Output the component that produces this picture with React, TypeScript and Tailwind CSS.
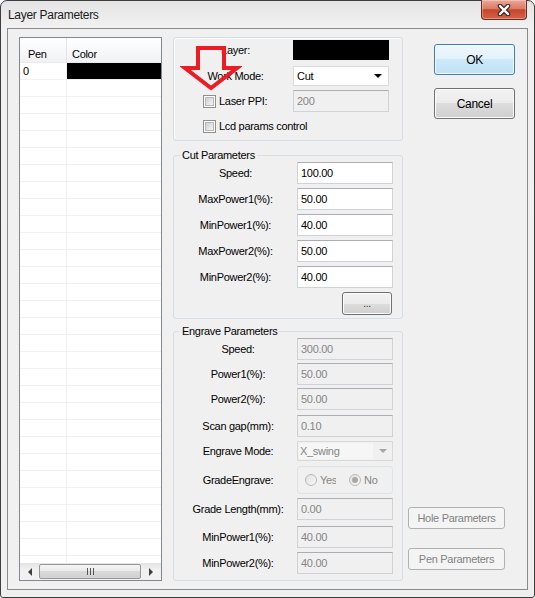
import React from 'react';

const CUT_ROWS = [
  { label: 'Speed:', value: '100.00' },
  { label: 'MaxPower1(%):', value: '50.00' },
  { label: 'MinPower1(%):', value: '40.00' },
  { label: 'MaxPower2(%):', value: '50.00' },
  { label: 'MinPower2(%):', value: '40.00' },
];

const PEN_ROWS = Array.from({ length: 30 }, (_, i) => i);

function TextBox({ value, disabled = false }: { value: string; disabled?: boolean }) {
  return (
    <input
      readOnly
      disabled={disabled}
      value={value}
      className={`h-[22px] w-[96px] border border-[#cfd3d8] border-t-[#abadb3] px-[3px] text-[11px] outline-none ${
        disabled ? 'bg-[#f0f0f0] text-[#858585]' : 'bg-white text-black'
      }`}
    />
  );
}

function CheckBox() {
  return (
    <span className="flex h-[13px] w-[13px] shrink-0 items-center justify-center border border-[#8e8f8f] bg-white">
      <span className="block h-[9px] w-[9px] border border-[#b5b9bd] bg-[linear-gradient(135deg,#cdd0d4,#f4f4f4)]" />
    </span>
  );
}

function Radio({ checked = false }: { checked?: boolean }) {
  return (
    <span className="flex h-[12px] w-[12px] shrink-0 items-center justify-center rounded-full border border-[#b9b9b9] bg-[linear-gradient(135deg,#e2e2e2,#f7f7f7)]">
      {checked && <span className="block h-[6px] w-[6px] rounded-full bg-[#a8a8a8]" />}
    </span>
  );
}

function Caret({ color }: { color: string }) {
  return <span className={`h-0 w-0 border-x-[4px] border-t-[4px] border-x-transparent ${color}`} />;
}

const winButton =
  'rounded-[3px] border border-[#707070] bg-[linear-gradient(#f2f2f2,#ebebeb_50%,#dddddd_50%,#cfcfcf)] shadow-[inset_0_0_0_1px_#fcfcfc]';

function PenList() {
  return (
    <div className="flex h-[544px] w-[143px] flex-col overflow-hidden border border-[#828790] bg-white">
      {/* header */}
      <div className="flex h-[25px] shrink-0 border-b border-[#eaeaea] bg-gradient-to-b from-white to-[#f1f2f4]">
        <div className="w-[47px] border-r border-[#e3e4e6] pl-[8px] pt-[8px]">Pen</div>
        <div className="pl-[5px] pt-[8px]">Color</div>
      </div>
      {/* rows */}
      <div className="flex-1 overflow-hidden">
        {PEN_ROWS.map(i => (
          <div key={i} className="flex h-[17px] border-b border-[#f0f0f0]">
            <div className="flex w-[47px] items-center border-r border-[#f0f0f0] pl-[3px]">{i === 0 ? '0' : ''}</div>
            <div className={`flex-1 ${i === 0 ? 'bg-black' : ''}`} />
          </div>
        ))}
      </div>
      {/* horizontal scrollbar */}
      <div className="flex h-[17px] shrink-0 items-center bg-[linear-gradient(#e3e3e3,#f1f1f1_40%,#f1f1f1)]">
        <div className="flex w-[17px] justify-center pl-[2px]">
          <span className="h-0 w-0 border-y-[4px] border-r-[4px] border-y-transparent border-r-[#3f3f3f]" />
        </div>
        <div className="ml-[2px] flex h-[15px] w-[102px] items-center justify-center gap-[2px] rounded-[2px] border border-[#979797] bg-[linear-gradient(#f5f5f5,#e9e9e9_50%,#d9d9d9_50%,#d2d2d2)]">
          <span className="h-[7px] w-[1px] bg-[#555]" />
          <span className="h-[7px] w-[1px] bg-[#555]" />
          <span className="h-[7px] w-[1px] bg-[#555]" />
        </div>
        <div className="ml-[2px] flex w-[17px] justify-center pr-[2px]">
          <span className="h-0 w-0 border-y-[4px] border-l-[4px] border-y-transparent border-l-[#3f3f3f]" />
        </div>
      </div>
    </div>
  );
}

function EngraveRow({ label, mt, children }: { label: string; mt: string; children: React.ReactNode }) {
  return (
    <div className={`flex items-center ${mt}`}>
      <span className="w-[123px] pl-[5px] text-center">{label}</span>
      {children}
    </div>
  );
}

export default function App() {
  return (
    <div className="relative flex h-[598px] w-[535px] flex-col rounded-t-[7px] rounded-b-[3px] border border-[#3e3e3e] bg-[linear-gradient(#e4e4e4,#f1f1f1_26px,#efefef)] font-['Liberation_Sans',Arial,sans-serif] text-[11px] tracking-[-0.3px] text-black">
      {/* Title bar */}
      <div className="flex h-[27px] shrink-0 items-start justify-between pl-[7px] pr-[7px]">
        <span className="mt-[7px] text-[12px] leading-[15px] text-[#1b1b1b]">Layer Parameters</span>
        <div className="-mt-px flex h-[20px] w-[46px] items-center justify-center rounded-b-[4px] border border-t-0 border-[#6b2b1f] bg-[linear-gradient(#eaa899,#dc7a64_45%,#c5452c_52%,#d4644a)] shadow-[inset_0_0_0_1px_rgba(255,255,255,0.3)]">
          <svg width="14" height="12" viewBox="0 0 14 12">
            <path d="M3 2 L11 10 M11 2 L3 10" stroke="#3b2a28" strokeWidth="4.6" strokeLinecap="round" />
            <path d="M3 2 L11 10 M11 2 L3 10" stroke="#ffffff" strokeWidth="2.4" strokeLinecap="round" />
          </svg>
        </div>
      </div>

      {/* Client area */}
      <div className="mx-[6px] flex h-[562px] shrink-0 border border-[#8a8a8a] bg-[#f0f0f0] pl-[11px] pt-[8px]">
        <PenList />

        {/* Parameter column */}
        <div className="ml-[11px] flex w-[230px] flex-col">
          {/* Layer group */}
          <div className="h-[104px] rounded-[3px] border border-[#d5dfe5] pt-[2px] shadow-[inset_1px_1px_0_#fbfbfb]">
            <div className="flex h-[20px] items-center">
              <span className="w-[119px] pl-[4px] text-center">Layer:</span>
              <div className="h-[20px] w-[96px] bg-black" />
            </div>
            <div className="mt-[6px] flex h-[20px] items-center">
              <span className="w-[119px] pl-[4px] text-center">Work Mode:</span>
              <div className="flex h-[20px] w-[96px] items-center justify-between border border-[#dadada] bg-white pl-[3px] pr-[6px]">
                <span>Cut</span>
                <Caret color="border-t-black" />
              </div>
            </div>
            <div className="mt-[4px] flex h-[22px] items-center">
              <div className="flex w-[119px] items-center pl-[29px]">
                <CheckBox />
                <span className="ml-[3px]">Laser PPI:</span>
              </div>
              <TextBox value="200" disabled />
            </div>
            <div className="mt-[8px] flex h-[13px] items-center pl-[29px]">
              <CheckBox />
              <span className="ml-[3px]">Lcd params control</span>
            </div>
          </div>

          {/* Cut Parameters */}
          <fieldset className="mt-[8px] rounded-[3px] border border-[#d5dfe5] pb-[3px]">
            <legend className="ml-[6px] px-[2px] leading-[13px]">Cut Parameters</legend>
            {CUT_ROWS.map((r, i) => (
              <div key={r.label} className={`flex h-[22px] items-center ${i ? 'mt-[4px]' : ''}`}>
                <span className="w-[123px] text-center">{r.label}</span>
                <TextBox value={r.value} />
              </div>
            ))}
            <div className="mt-[4px] flex justify-end pr-[10px]">
              <button className={`h-[23px] w-[50px] text-[10px] leading-[10px] text-[#333] ${winButton}`}>...</button>
            </div>
          </fieldset>

          {/* Engrave Parameters */}
          <fieldset className="mt-[6px] rounded-[3px] border border-[#d5dfe5] pb-[6px]">
            <legend className="ml-[6px] px-[2px] leading-[13px]">Engrave Parameters</legend>
            <EngraveRow label="Speed:" mt="">
              <TextBox value="300.00" disabled />
            </EngraveRow>
            <EngraveRow label="Power1(%):" mt="mt-[3px]">
              <TextBox value="50.00" disabled />
            </EngraveRow>
            <EngraveRow label="Power2(%):" mt="mt-[3px]">
              <TextBox value="50.00" disabled />
            </EngraveRow>
            <EngraveRow label="Scan gap(mm):" mt="mt-[5px]">
              <TextBox value="0.10" disabled />
            </EngraveRow>
            <EngraveRow label="Engrave Mode:" mt="mt-[4px]">
              <div className="flex h-[20px] w-[96px] items-center border border-[#d9d9d9] bg-[#f0f0f0] p-px pr-[5px]">
                <span className="flex h-full w-[74px] items-center bg-[#f6f6f6] pl-[1px] text-[#858585]">X_swing</span>
                <span className="flex flex-1 justify-end">
                  <Caret color="border-t-[#a5a5a5]" />
                </span>
              </div>
            </EngraveRow>
            <EngraveRow label="GradeEngrave:" mt="mt-[5px]">
              <div className="flex h-[28px] w-[96px] items-center rounded-[3px] border border-[#dde3e8] pl-[7px] text-[#858585]">
                <Radio />
                <span className="ml-[3px] w-[16px] overflow-hidden whitespace-nowrap">Yes</span>
                <span className="ml-[13px]">
                  <Radio checked />
                </span>
                <span className="ml-[3px]">No</span>
              </div>
            </EngraveRow>
            <EngraveRow label="Grade Length(mm):" mt="mt-[4px]">
              <TextBox value="0.00" disabled />
            </EngraveRow>
            <EngraveRow label="MinPower1(%):" mt="mt-[6px]">
              <TextBox value="40.00" disabled />
            </EngraveRow>
            <EngraveRow label="MinPower2(%):" mt="mt-[4px]">
              <TextBox value="40.00" disabled />
            </EngraveRow>
          </fieldset>
        </div>

        {/* Buttons column */}
        <div className="flex flex-1 flex-col pt-[7px]">
          <button className="ml-[31px] h-[31px] w-[81px] rounded-[3px] border border-[#3c7fb1] bg-[linear-gradient(#eef7fd,#e1f2fb_50%,#cde9f8_50%,#bfe2f5)] text-[12px] shadow-[inset_0_0_0_1px_#f6fbfe]">
            OK
          </button>
          <button className={`ml-[31px] mt-[13px] h-[31px] w-[81px] text-[12px] ${winButton}`}>Cancel</button>
          <button className="ml-[5px] mt-auto h-[22px] w-[97px] rounded-[3px] border border-[#adb2b5] bg-[#f4f4f4] text-[#838383]">
            Hole Parameters
          </button>
          <button className="mb-[19px] ml-[5px] mt-[19px] h-[22px] w-[97px] rounded-[3px] border border-[#adb2b5] bg-[#f4f4f4] text-[#838383]">
            Pen Parameters
          </button>
        </div>
      </div>

      {/* red annotation arrow */}
      <svg className="pointer-events-none absolute left-[179px] top-[41px]" width="62" height="52" viewBox="0 0 62 52">
        <path
          d="M18 6 L44 6 L44 26 L57 26 L31 46 L5 26 L18 26 Z"
          fill="none"
          stroke="#ec1c24"
          strokeWidth="4"
          strokeLinejoin="miter"
        />
      </svg>
    </div>
  );
}
